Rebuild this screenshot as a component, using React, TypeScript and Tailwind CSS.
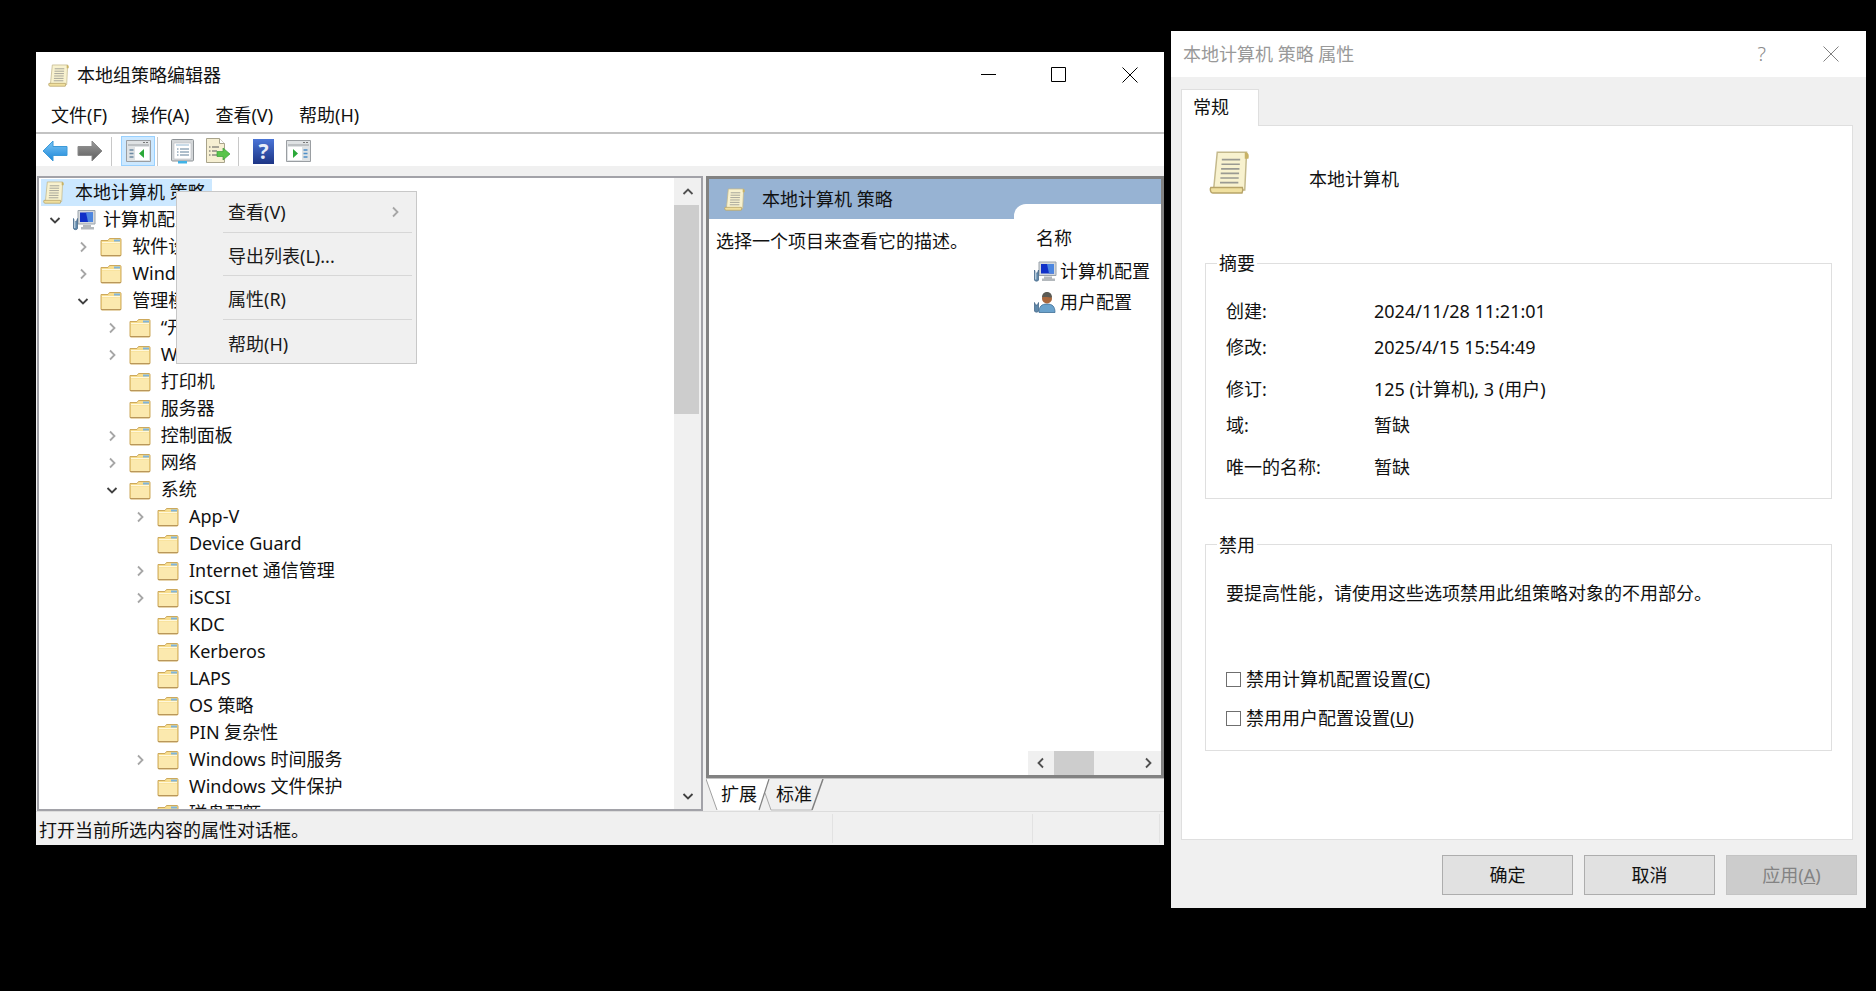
import React from 'react';

const FONT = { fontFamily: '"Noto Sans", "Noto Sans CJK SC", sans-serif' };

const treeRows = [
  { label: '计算机配置', depth: 0, arrow: 'down', icon: 'computer' },
  { label: '软件设置', depth: 1, arrow: 'right' },
  { label: 'Windows 设置', depth: 1, arrow: 'right' },
  { label: '管理模板', depth: 1, arrow: 'down' },
  { label: '“开始”菜单和任务栏', depth: 2, arrow: 'right' },
  { label: 'Windows 组件', depth: 2, arrow: 'right' },
  { label: '打印机', depth: 2 },
  { label: '服务器', depth: 2 },
  { label: '控制面板', depth: 2, arrow: 'right' },
  { label: '网络', depth: 2, arrow: 'right' },
  { label: '系统', depth: 2, arrow: 'down' },
  { label: 'App-V', depth: 3, arrow: 'right' },
  { label: 'Device Guard', depth: 3 },
  { label: 'Internet 通信管理', depth: 3, arrow: 'right' },
  { label: 'iSCSI', depth: 3, arrow: 'right' },
  { label: 'KDC', depth: 3 },
  { label: 'Kerberos', depth: 3 },
  { label: 'LAPS', depth: 3 },
  { label: 'OS 策略', depth: 3 },
  { label: 'PIN 复杂性', depth: 3 },
  { label: 'Windows 时间服务', depth: 3, arrow: 'right' },
  { label: 'Windows 文件保护', depth: 3 },
  { label: '磁盘配额', depth: 3 },
];

const summaryRows = [
  { label: '创建:', value: '2024/11/28 11:21:01', gap: 'mt-0' },
  { label: '修改:', value: '2025/4/15 15:54:49', gap: 'mt-[12px]' },
  { label: '修订:', value: '125 (计算机), 3 (用户)', gap: 'mt-[18px]' },
  { label: '域:', value: '暂缺', gap: 'mt-[12px]' },
  { label: '唯一的名称:', value: '暂缺', gap: 'mt-[18px]' },
];

const ScrollIcon = ({ className }: { className: string }) => (
  <svg viewBox="0 0 24 24" className={className}>
    <path d="M4.500 1h16l-1 20.500H2.500z" fill="#f8f2cf" stroke="#c4b98c" strokeWidth=".8" />
    <path d="M19.500 1c2 0 2.500 1.200 2 3.500h-2z" fill="#c8b265" />
    <path d="M7 5h10M6.800 7.500h10M6.600 10h10M6.400 12.500h10M6.200 15h10M6 17.500h10" stroke="#9a9a92" strokeWidth=".9" fill="none" />
    <path d="M1 20.200h17.200c.4 1 .3 2.200-.2 3H2c-1.200 0-1.600-2.200-1-3z" fill="#f0e09f" stroke="#b7a468" strokeWidth=".8" />
  </svg>
);

const FolderIcon = () => (
  <svg viewBox="0 0 22 20" className="w-[22px] h-[20px] shrink-0">
    <path d="M1 3.500h7l1.500-2H20c.6 0 1 .4 1 1V18c0 .6-.4 1-1 1H2c-.6 0-1-.4-1-1z" fill="#f7dd8e" stroke="#cda95c" strokeWidth="1" />
    <path d="M2 6.500h18V18H2z" fill="#fbe9ae" />
    <path d="M2 5.500h18" stroke="#fff8dc" strokeWidth="1" />
    <path d="M14 2.500h6v2h-6z" fill="#7fb4dc" />
    <path d="M1 18.500h20" stroke="#b9975a" strokeWidth="1" />
  </svg>
);

const ComputerIcon = ({ className }: { className: string }) => (
  <svg viewBox="0 0 24 22" className={className}>
    <path d="M6 1.500h17v13.500H6z" fill="#d4d8dc" stroke="#9aa3ab" strokeWidth="1" />
    <path d="M8 3.500h13v9.500H8z" fill="#1030c8" />
    <path d="M14 3.500h7v9.500h-5z" fill="#4c86e0" />
    <path d="M11 16h8v2h3v2.500H9V18h2z" fill="#b3b8bc" />
    <path d="M1.500 9.500l1 3h2l1-3v10c0 1.500-4 1.500-4 0z" fill="#5f88aa" stroke="#48698a" strokeWidth=".8" />
    <path d="M2.800 11v8" stroke="#dce8f0" strokeWidth="1" />
  </svg>
);

const UserIcon = ({ className }: { className: string }) => (
  <svg viewBox="0 0 24 22" className={className}>
    <path d="M6 21c0-6 2.500-8.500 8-8.500S22 15 22 21z" fill="#6aa2cc" stroke="#3f6f95" strokeWidth=".8" />
    <circle cx="14" cy="7" r="5" fill="#a9683e" />
    <path d="M9 6c0-4 2.500-5.500 5-5.500S19 2 19 6c-3 0-7-1-10 0z" fill="#5b5b55" />
    <path d="M1.500 11l1 2.500h2l1-2.500v8.500c0 1.500-4 1.500-4 0z" fill="#5f88aa" stroke="#48698a" strokeWidth=".8" />
  </svg>
);

const ArrowIcon = ({ direction }: { direction: 'back' | 'forward' }) => (
  <svg viewBox="0 0 26 22" className="w-[26px] h-[22px]">
    <defs>
      <linearGradient id="arrow-blue" x1="0" y1="0" x2="0" y2="1">
        <stop offset="0" stopColor="#7cc6f5" />
        <stop offset="1" stopColor="#1b86d8" />
      </linearGradient>
      <linearGradient id="arrow-gray" x1="0" y1="0" x2="0" y2="1">
        <stop offset="0" stopColor="#9a9a9a" />
        <stop offset="1" stopColor="#5e5e5e" />
      </linearGradient>
    </defs>
    {direction === 'back' ? (
      <path d="M1 11L11 1v5.500h14v9H11V21z" fill="url(#arrow-blue)" stroke="#3d9ad8" strokeWidth="1" />
    ) : (
      <path d="M25 11L15 1v5.500H1v9h14V21z" fill="url(#arrow-gray)" stroke="#8a8a8a" strokeWidth="1" />
    )}
  </svg>
);

const PaneIcon = ({ side }: { side: 'left' | 'right' }) => (
  <svg viewBox="0 0 25 22" className="w-[25px] h-[22px]">
    <path d="M.5.500h24v21H.5z" fill="#dfe2e4" stroke="#9a9ea2" />
    <path d="M2 5h21" stroke="#9a9ea2" />
    <path d="M17 2.500h2M20 2.500h2" stroke="#777" />
    <path d="M2 7h21v13H2z" fill="#fff" />
    {side === 'left' ? (
      <>
        <path d="M2 7h7v13H2z" fill="#dfe2e4" />
        <path d="M3.500 10h4M3.500 13.500h4M3.500 17h4" stroke="#6d8aa3" strokeWidth="1.500" />
        <path d="M18 9v9l-5-4.500z" fill="#2aa838" />
      </>
    ) : (
      <>
        <path d="M16 7h7v13h-7z" fill="#dfe2e4" />
        <path d="M17.500 10h4M17.500 13.500h4M17.500 17h4" stroke="#4d8fc8" strokeWidth="1.500" />
        <path d="M7 9v9l5-4.500z" fill="#2aa838" />
      </>
    )}
  </svg>
);

const PropertiesIcon = () => (
  <svg viewBox="0 0 23 25" className="w-[23px] h-[25px]">
    <path d="M1.500.500h20c.6 0 1 .4 1 1V21c0 .6-.4 1-1 1h-20c-.6 0-1-.4-1-1V1.500c0-.6.4-1 1-1z" fill="#d4d7d9" stroke="#8d9296" />
    <path d="M3 4h17v16H3z" fill="#fff" stroke="#b6bbbf" strokeWidth=".6" />
    <path d="M5 6h13" stroke="#c9dbe8" strokeWidth="2" />
    <path d="M6 10h1.500M9 10h9M6 13h1.500M9 13h9M6 16h1.500M9 16h9" stroke="#5f7f98" strokeWidth="1" />
    <path d="M7 22h9v2.500H7z" fill="#3fb2e6" />
  </svg>
);

const ExportIcon = () => (
  <svg viewBox="0 0 26 26" className="w-[26px] h-[26px]">
    <path d="M1.500.500h13l5 5v19h-18z" fill="#f6efd2" stroke="#a9a48c" />
    <path d="M14.500.500v5h5" fill="#fff" stroke="#a9a48c" />
    <path d="M4 9h1.500M7 9h7M4 13h1.500M7 13h5M4 17h1.500M7 17h5" stroke="#5a5a5a" strokeWidth="1" />
    <path d="M12 13.500h6V10l7 6-7 6v-3.500h-6z" fill="#59c44a" stroke="#3a9f3a" strokeWidth=".7" />
  </svg>
);

const HelpIcon = () => (
  <div className="w-[21px] h-[25px] bg-gradient-to-b from-[#4b75d8] to-[#1d3585] text-[#e8edf8] text-[21px] leading-[25px] text-center font-bold">?</div>
);

const Chevron = ({ dir, className, style }: { dir?: string; className?: string; style?: React.CSSProperties }) => {
  let d = 'M4 1.500L8.500 6 4 10.500';
  let color = className?.includes('dark') ? '#505050' : '#a6a6a6';
  if (dir === 'down') {
    d = 'M1.500 4L6 8.500 10.500 4';
    color = '#404040';
  } else if (dir === 'up') {
    d = 'M1.500 8L6 3.500 10.500 8';
    color = '#505050';
  } else if (dir === 'left') {
    d = 'M8 1.500L3.500 6 8 10.500';
    color = '#505050';
  }
  return (
    <svg viewBox="0 0 12 12" style={style} className={`w-[12px] h-[12px] ${className ?? ''}`}>
      <path d={d} fill="none" stroke={color} strokeWidth="1.800" />
    </svg>
  );
};

const MenuItem = ({ label, className }: { label: string; className: string }) => (
  <div className={`flex items-center pl-[51px] ${className}`}>
    <span>{label}</span>
  </div>
);

const MenuSeparator = () => <div className="ml-[46px] mr-[4px] h-px bg-[#d7d7d7]" />;

const ContextMenu = () => (
  <div className="absolute left-[140px] top-[139px] w-[241px] h-[173px] bg-[#f0f0f0] border border-[#c8c8c8] text-[#1a1a1a]">
    <div className="relative">
      <MenuItem label="查看(V)" className="h-[40px]" />
      <Chevron dir="right" className="absolute left-[212px] top-[14px]" />
    </div>
    <MenuSeparator />
    <MenuItem label="导出列表(L)..." className="h-[42px] pt-[5px]" />
    <MenuSeparator />
    <MenuItem label="属性(R)" className="h-[43px] pt-[4px]" />
    <MenuSeparator />
    <MenuItem label="帮助(H)" className="h-[43px] pt-[5px]" />
  </div>
);

const TreePane = () => (
  <div className="relative w-[666px] ml-px flex border-2 border-[#a2a2a8] bg-white">
    <div className="flex-1 overflow-hidden">
      <div className="flex items-center h-[27px] mt-px ml-[2px] w-[171px] bg-[#cce8ff]">
        <ScrollIcon className="w-[23px] h-[25px] ml-[2px] shrink-0" />
        <span className="ml-[9px] whitespace-nowrap">本地计算机 策略</span>
      </div>
      {treeRows.map((row, index) => (
        <div
          key={index}
          className="relative flex items-center h-[27px] whitespace-nowrap"
          style={{ paddingLeft: 33 + row.depth * 28.33 }}
        >
          {row.arrow && (
            <Chevron dir={row.arrow} className="absolute top-[8px]" style={{ left: 10 + row.depth * 28.33 }} />
          )}
          {row.icon === 'computer' ? (
            <ComputerIcon className="w-[24px] h-[24px] shrink-0" />
          ) : (
            <FolderIcon />
          )}
          <span className={row.icon === 'computer' ? 'ml-[7px]' : 'ml-[10px]'}>{row.label}</span>
        </div>
      ))}
    </div>
    <div className="w-[27px] flex flex-col bg-[#f0f0f0] shrink-0">
      <div className="h-[27px] flex items-center justify-center shrink-0">
        <Chevron dir="up" />
      </div>
      <div className="h-[209px] w-[25px] bg-[#cdcdcd] shrink-0" />
      <div className="flex-1" />
      <div className="h-[27px] flex items-center justify-center shrink-0">
        <Chevron dir="down" />
      </div>
    </div>
  </div>
);

const ResultPane = () => (
  <div className="ml-[3px] w-[458px] flex flex-col">
    <div className="flex-1 flex flex-col border-[3px] border-[#828282] bg-white min-h-0">
      <div className="relative h-[40px] bg-[#97b3d3] flex items-center shrink-0">
        <ScrollIcon className="w-[23px] h-[23px] ml-[15px]" />
        <span className="ml-[15px]">本地计算机 策略</span>
        <div className="absolute right-0 bottom-0 w-[147px] h-[15px] bg-white rounded-tl-[12px]" />
      </div>
      <div className="flex-1 flex min-h-0">
        <div className="w-[319px] pl-[7px] pt-[10px] shrink-0 leading-[24px]">选择一个项目来查看它的描述。</div>
        <div className="flex-1 flex flex-col min-w-0">
          <div className="flex-1 overflow-hidden whitespace-nowrap">
            <div className="pl-[8px] pt-[7px] leading-[24px]">名称</div>
            <div className="flex items-center mt-[8px] pl-[5px] h-[26px]">
              <ComputerIcon className="w-[24px] h-[23px] shrink-0" />
              <span className="ml-[3px]">计算机配置</span>
            </div>
            <div className="flex items-center mt-[5px] pl-[5px] h-[26px]">
              <UserIcon className="w-[24px] h-[23px] shrink-0" />
              <span className="ml-[3px]">用户配置</span>
            </div>
          </div>
          <div className="h-[24px] flex items-center bg-[#f0f0f0] shrink-0">
            <div className="w-[26px] flex justify-center"><Chevron dir="left" /></div>
            <div className="w-[40px] h-full bg-[#cdcdcd]" />
            <div className="flex-1" />
            <div className="w-[26px] flex justify-center"><Chevron dir="right" className="dark" /></div>
          </div>
        </div>
      </div>
    </div>
    <div className="relative h-[33px] shrink-0 border-t border-[#c4c4c4]">
      <svg viewBox="0 0 120 32" className="absolute left-0 top-0 w-[120px] h-[32px]">
        <path d="M59 14L65 31H106L117 0H62z" fill="#f0f0f0" />
        <path d="M59 14L65 31" fill="none" stroke="#a8a8a8" strokeWidth="1" />
        <path d="M65 31H106" fill="none" stroke="#b8b8b8" strokeWidth="1" />
        <path d="M106 31L117 0" fill="none" stroke="#808080" strokeWidth="1.500" />
        <path d="M0 0L11 31H53L63 0z" fill="#fff" />
        <path d="M0 0L11 31" fill="none" stroke="#a0a0a0" strokeWidth="1" />
        <path d="M53 31L63 0" fill="none" stroke="#808080" strokeWidth="1.200" />
      </svg>
      <div className="relative flex pl-[15px] leading-[31px]">
        <span>扩展</span>
        <span className="ml-[19px]">标准</span>
      </div>
    </div>
  </div>
);

const StatusBar = () => (
  <div className="h-[34px] border-t border-[#dcdcdc] flex shrink-0">
    <div className="w-[797px] pl-[3px] leading-[32px] border-r border-[#e2e2e2] my-[2px]">打开当前所选内容的属性对话框。</div>
    <div className="w-[200px] border-r border-[#e2e2e2] my-[2px]" />
    <div className="w-[127px] border-r border-[#e2e2e2] my-[2px]" />
  </div>
);

const MainWindow = () => (
  <div className="relative mt-[52px] ml-[36px] w-[1128px] h-[793px] bg-[#f0f0f0] flex flex-col shrink-0">
    <div className="h-[46px] bg-white flex items-center shrink-0">
      <ScrollIcon className="w-[23px] h-[23px] ml-[12px]" />
      <span className="ml-[6px]">本地组策略编辑器</span>
      <div className="ml-auto flex items-center">
        <svg viewBox="0 0 16 16" className="w-[16px] h-[16px] mr-[54px]"><path d="M0 7.500h15" stroke="#000" strokeWidth="1" /></svg>
        <svg viewBox="0 0 16 16" className="w-[16px] h-[16px] mr-[55px]"><path d="M.5.500h14v14H.5z" fill="none" stroke="#000" strokeWidth="1" /></svg>
        <svg viewBox="0 0 16 16" className="w-[16px] h-[16px] mr-[26px]"><path d="M.5.500l15 15M15.500.500l-15 15" fill="none" stroke="#000" strokeWidth="1" /></svg>
      </div>
    </div>
    <div className="h-[34px] bg-white flex items-center shrink-0 pl-[15px]">
      <span>文件(F)</span>
      <span className="ml-[24px]">操作(A)</span>
      <span className="ml-[26px]">查看(V)</span>
      <span className="ml-[26px]">帮助(H)</span>
    </div>
    <div className="h-[2px] bg-[#c3c3c3] shrink-0" />
    <div className="h-[32px] bg-white flex items-center shrink-0 pl-[6px] pt-[2px]">
      <ArrowIcon direction="back" />
      <div className="ml-[9px]"><ArrowIcon direction="forward" /></div>
      <div className="ml-[8px] w-px h-[29px] bg-[#c8c8c8]" />
      <div className="ml-[9px] w-[34px] h-[30px] bg-[#cce8ff] border border-[#99d1ff] flex items-center justify-center">
        <PaneIcon side="left" />
      </div>
      <div className="ml-[2px] w-px h-[29px] bg-[#c8c8c8]" />
      <div className="ml-[13px]"><PropertiesIcon /></div>
      <div className="ml-[11px]"><ExportIcon /></div>
      <div className="ml-[7px] w-px h-[29px] bg-[#c8c8c8]" />
      <div className="ml-[14px]"><HelpIcon /></div>
      <div className="ml-[12px]"><PaneIcon side="right" /></div>
    </div>
    <div className="h-[10px] shrink-0" />
    <div className="flex-1 flex min-h-0 overflow-hidden">
      <TreePane />
      <ResultPane />
    </div>
    <StatusBar />
    <ContextMenu />
  </div>
);

const GroupBox = ({ title, className, legendClass, children }: { title: string; className: string; legendClass: string; children: React.ReactNode }) => (
  <div className={`relative ml-[23px] mr-[20px] border border-[#dfdfdf] pl-[20px] ${className}`}>
    <span className={`absolute left-[11px] px-[2px] bg-white leading-[24px] ${legendClass}`}>{title}</span>
    {children}
  </div>
);

const CheckRow = ({ label, hotkey, className }: { label: string; hotkey: string; className: string }) => (
  <div className={`flex items-center h-[24px] ${className}`}>
    <div className="w-[15px] h-[15px] border border-[#6f6f6f] bg-white shrink-0" />
    <span className="ml-[5px]">
      {label}(<span className="underline">{hotkey}</span>)
    </span>
  </div>
);

const DialogButton = ({ children, disabled }: { children: React.ReactNode; disabled?: boolean }) => (
  <div
    className={
      disabled
        ? 'w-[131px] h-[40px] flex items-center justify-center bg-[#cccccc] border border-[#c4c4c4] text-[#838383]'
        : 'w-[131px] h-[40px] flex items-center justify-center bg-[#e1e1e1] border border-[#adadad]'
    }
  >
    {children}
  </div>
);

const PropertiesDialog = () => (
  <div className="mt-[31px] ml-[7px] w-[695px] h-[877px] bg-[#f0f0f0] flex flex-col shrink-0">
    <div className="h-[46px] bg-white flex items-center pl-[12px] text-[#999999] shrink-0">
      <span>本地计算机 策略 属性</span>
      <span className="ml-auto text-[#8a8a8a] text-[20px] font-light">?</span>
      <svg viewBox="0 0 16 16" className="w-[16px] h-[16px] ml-[57px] mr-[27px]"><path d="M.5.500l15 15M15.500.500l-15 15" fill="none" stroke="#808080" strokeWidth="1" /></svg>
    </div>
    <div className="pt-[12px] pl-[10px] shrink-0">
      <div className="relative w-[78px] h-[37px] -mb-px bg-white border border-b-0 border-[#dfdfdf] pl-[11px] leading-[34px]">常规</div>
    </div>
    <div className="ml-[10px] mr-[13px] h-[715px] bg-white border border-[#dfdfdf] shrink-0">
      <div className="h-[137px] pt-[23px] pl-[27px] flex">
        <ScrollIcon className="w-[44px] h-[47px]" />
        <span className="ml-[56px] mt-[18px] leading-[24px]">本地计算机</span>
      </div>
      <GroupBox title="摘要" legendClass="-top-[13px]" className="h-[236px] pt-[35px]">
        {summaryRows.map((row) => (
          <div key={row.label} className={`flex h-[24px] leading-[24px] ${row.gap}`}>
            <span className="w-[148px] shrink-0">{row.label}</span>
            <span>{row.value}</span>
          </div>
        ))}
      </GroupBox>
      <GroupBox title="禁用" legendClass="-top-[12px]" className="h-[207px] mt-[45px] pt-[36px]">
        <div className="leading-[24px]">要提高性能，请使用这些选项禁用此组策略对象的不用部分。</div>
        <CheckRow label="禁用计算机配置设置" hotkey="C" className="mt-[62px]" />
        <CheckRow label="禁用用户配置设置" hotkey="U" className="mt-[15px]" />
      </GroupBox>
    </div>
    <div className="flex justify-end gap-[11px] mt-[15px] mr-[9px]">
      <DialogButton>确定</DialogButton>
      <DialogButton>取消</DialogButton>
      <DialogButton disabled>
        <span>应用(<span className="underline">A</span>)</span>
      </DialogButton>
    </div>
  </div>
);

export default function App() {
  return (
    <div className="w-[1876px] h-[991px] bg-black flex items-start overflow-hidden text-[18px] text-[#111111]" style={FONT}>
      <MainWindow />
      <PropertiesDialog />
    </div>
  );
}
